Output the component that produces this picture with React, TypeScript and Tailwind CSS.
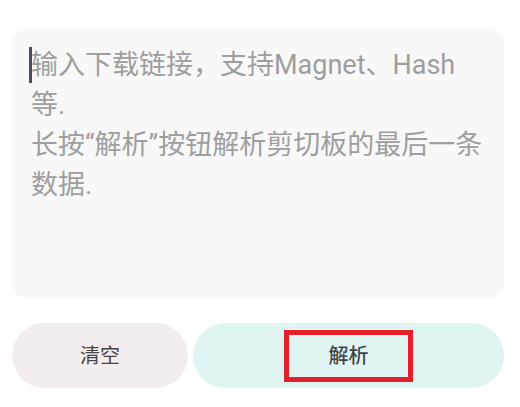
export default function App() {
  return (
    <div className="min-h-[407px] w-[520px] bg-white pl-3 pr-4 pt-[29px] font-['Roboto','Noto_Sans_CJK_SC',sans-serif]">
      {/* input area */}
      <div className="relative h-[269px] rounded-[14px] bg-[#f8f8f8] pl-[19px] pr-[16px] pt-4">
        <span className="absolute left-[17px] top-[18px] h-[36px] w-[3px] bg-[#4b4a5c]" />
        <p className="whitespace-nowrap text-[27px] leading-[40px] text-[#9e9e9e]">
          输入下载链接，支持Magnet、Hash
          <br />
          等.
          <br />
          长按“解析”按钮解析剪切板的最后一条
          <br />
          数据.
        </p>
      </div>

      {/* actions */}
      <div className="mt-[25px] flex h-[65px] gap-[5px]">
        <button className="flex w-[176px] items-center justify-center rounded-full bg-[#f3eded] text-[20px] text-[#454545]">
          清空
        </button>
        <button className="flex flex-1 items-center justify-center rounded-full bg-[#e1f4f4] text-[20px] font-medium text-[#3d4747]">
          <span className="flex h-[52px] w-[129px] items-center justify-center border-[5px] border-[#e3202a]">
            解析
          </span>
        </button>
      </div>
    </div>
  );
}
